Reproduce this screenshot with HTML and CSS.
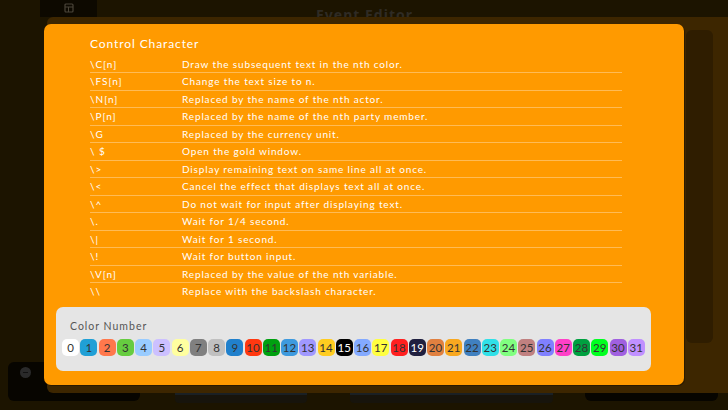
FILE: index.html
```html
<!DOCTYPE html>
<html>
<head>
<meta charset="utf-8">
<link rel="stylesheet" href="styles.css">
</head>
<body>
<div class="screen">
  <div class="topbar">
    <div class="tab">
      <svg width="10" height="10" viewBox="0 0 10 10"><rect x="1" y="1" width="8" height="8" rx="1" fill="none" stroke="#4a4438" stroke-width="1.2"/><line x1="1" y1="4" x2="9" y2="4" stroke="#4a4438" stroke-width="1"/><line x1="4.5" y1="4" x2="4.5" y2="9" stroke="#4a4438" stroke-width="1"/></svg>
    </div>
    <div class="apptitle">Event Editor</div>
  </div>
  <div class="dock-left"><span class="minus"></span></div>
  <div class="dock-right"></div>
  <div class="slate s1"></div>
  <div class="slate s2"></div>
  <div class="editor">
    <div class="side"></div>
  </div>

  <div class="modal">
    <div class="mtitle">Control Character</div>
    <div class="table">
      <div class="row"><span class="code">\C[n]</span><span class="desc">Draw the subsequent text in the nth color.</span></div>
      <div class="row"><span class="code">\FS[n]</span><span class="desc">Change the text size to n.</span></div>
      <div class="row"><span class="code">\N[n]</span><span class="desc">Replaced by the name of the nth actor.</span></div>
      <div class="row"><span class="code">\P[n]</span><span class="desc">Replaced by the name of the nth party member.</span></div>
      <div class="row"><span class="code">\G</span><span class="desc">Replaced by the currency unit.</span></div>
      <div class="row"><span class="code">\ $</span><span class="desc">Open the gold window.</span></div>
      <div class="row"><span class="code">\&gt;</span><span class="desc">Display remaining text on same line all at once.</span></div>
      <div class="row"><span class="code">\&lt;</span><span class="desc">Cancel the effect that displays text all at once.</span></div>
      <div class="row"><span class="code">\^</span><span class="desc">Do not wait for input after displaying text.</span></div>
      <div class="row"><span class="code">\.</span><span class="desc">Wait for 1/4 second.</span></div>
      <div class="row"><span class="code">\|</span><span class="desc">Wait for 1 second.</span></div>
      <div class="row"><span class="code">\!</span><span class="desc">Wait for button input.</span></div>
      <div class="row"><span class="code">\V[n]</span><span class="desc">Replaced by the value of the nth variable.</span></div>
      <div class="row"><span class="code">\\</span><span class="desc">Replace with the backslash character.</span></div>
    </div>
    <div class="colors">
      <div class="clabel">Color Number</div>
      <div class="chips">
        <span class="chip c0">0</span><span class="chip c1">1</span><span class="chip c2">2</span><span class="chip c3">3</span><span class="chip c4">4</span><span class="chip c5">5</span><span class="chip c6">6</span><span class="chip c7">7</span><span class="chip c8">8</span><span class="chip c9">9</span><span class="chip c10">10</span><span class="chip c11">11</span><span class="chip c12">12</span><span class="chip c13">13</span><span class="chip c14">14</span><span class="chip c15">15</span><span class="chip c16">16</span><span class="chip c17">17</span><span class="chip c18">18</span><span class="chip c19">19</span><span class="chip c20">20</span><span class="chip c21">21</span><span class="chip c22">22</span><span class="chip c23">23</span><span class="chip c24">24</span><span class="chip c25">25</span><span class="chip c26">26</span><span class="chip c27">27</span><span class="chip c28">28</span><span class="chip c29">29</span><span class="chip c30">30</span><span class="chip c31">31</span>
      </div>
    </div>
  </div>
</div>
</body>
</html>
```
FILE: styles.css
```css
* { box-sizing: border-box; }
html, body { margin: 0; padding: 0; }
body {
  background: #1c1400;
  font-family: Lato, "Noto Sans", sans-serif;
}
.screen {
  position: relative;
  width: 728px;
  height: 410px;
  overflow: hidden;
  background: #1c1400;
}
.topbar {
  height: 17px;
  display: flex;
  position: relative;
}
.tab {
  margin-left: 40px;
  width: 57px;
  height: 17px;
  background: #0d0900;
  display: flex;
  justify-content: center;
  padding-top: 3px;
}
.apptitle {
  margin-left: 219px;
  margin-top: 7px;
  font-family: "Noto Sans", sans-serif;
  font-weight: bold;
  font-size: 14px;
  line-height: 16px;
  height: 16px;
  letter-spacing: 1px;
  color: #2f2b24;
}
.dock-left {
  position: absolute;
  left: 8px;
  top: 362px;
  width: 132px;
  height: 39px;
  background: #070500;
  border-radius: 6px;
}
.minus {
  position: absolute;
  left: 12px;
  top: 5px;
  width: 11px;
  height: 11px;
  border-radius: 50%;
  background: #2a2a2a;
}
.minus::after {
  content: "";
  position: absolute;
  left: 3px;
  top: 5px;
  width: 5px;
  height: 1px;
  background: #111;
}
.dock-right {
  position: absolute;
  left: 585px;
  top: 370px;
  width: 133px;
  height: 31px;
  background: #070500;
  border-radius: 6px;
}
.slate {
  position: absolute;
  top: 389px;
  height: 14px;
  background: #17140c;
  border-top: 6px solid #1a2024;
  border-radius: 4px;
}
.s1 { left: 175px; width: 132px; }
.s2 { left: 350px; width: 203px; }
.editor {
  position: absolute;
  left: 47px;
  top: 17px;
  width: 720px;
  height: 376px;
  background: #3d2600;
  border-radius: 6px;
}
.side {
  position: absolute;
  left: 639px;
  top: 13px;
  width: 27px;
  height: 313px;
  background: #2f1d00;
  border-radius: 6px;
}
.modal {
  position: absolute;
  left: 44px;
  top: 24px;
  width: 640px;
  height: 361px;
  background: #ff9a00;
  border-radius: 7px;
  box-shadow: 1px 1px 0 #2a1a00;
  padding-top: 12px;
  display: flex;
  flex-direction: column;
  color: #fff;
}
.mtitle {
  margin-left: 46px;
  font-size: 12px;
  line-height: 16px;
  letter-spacing: 0.9px;
}
.table {
  margin-left: 46px;
  margin-top: 3.5px;
  width: 532px;
}
.row {
  display: flex;
  align-items: center;
  height: 17.5px;
  border-bottom: 1px solid #ffbb55;
  font-size: 10px;
  letter-spacing: 0.85px;
}
.row:last-child { border-bottom: none; height: 16.5px; }
.code { width: 92px; flex: none; letter-spacing: 1px; }
.desc { flex: 1; }
.colors {
  margin-left: 12px;
  margin-top: 7.5px;
  width: 595px;
  height: 64px;
  background: #e5e5e5;
  border-radius: 7px;
  padding: 12px 0 0 6px;
}
.clabel {
  padding-left: 8px;
  font-size: 10.5px;
  line-height: 14px;
  letter-spacing: 1px;
  color: #555;
}
.chips {
  display: flex;
  gap: 1.25px;
  margin-top: 5.5px;
}
.chip {
  width: 17px;
  height: 17.5px;
  border-radius: 5px;
  display: flex;
  align-items: center;
  justify-content: center;
  font-size: 11.5px;
  color: #333;
  flex: none;
}
.c0 { background: #ffffff; }
.c1 { background: #20a0d6; }
.c2 { background: #ff784c; }
.c3 { background: #66cc40; }
.c4 { background: #99ccff; }
.c5 { background: #ccc0ff; }
.c6 { background: #ffffa0; }
.c7 { background: #808080; }
.c8 { background: #c0c0c0; }
.c9 { background: #2080cc; }
.c10 { background: #ff3810; }
.c11 { background: #00a010; }
.c12 { background: #3e9ade; }
.c13 { background: #a098ff; }
.c14 { background: #ffcc20; }
.c15 { background: #000000; color: #fff; }
.c16 { background: #84aaff; }
.c17 { background: #ffff40; }
.c18 { background: #ff2020; }
.c19 { background: #202040; color: #fff; }
.c20 { background: #e08040; }
.c21 { background: #f8a820; }
.c22 { background: #4080c0; }
.c23 { background: #30e0e8; }
.c24 { background: #80ff80; }
.c25 { background: #c08080; }
.c26 { background: #8080ff; }
.c27 { background: #ff40c8; }
.c28 { background: #00a040; }
.c29 { background: #00ff20; }
.c30 { background: #a060e0; }
.c31 { background: #c090ff; }
```
